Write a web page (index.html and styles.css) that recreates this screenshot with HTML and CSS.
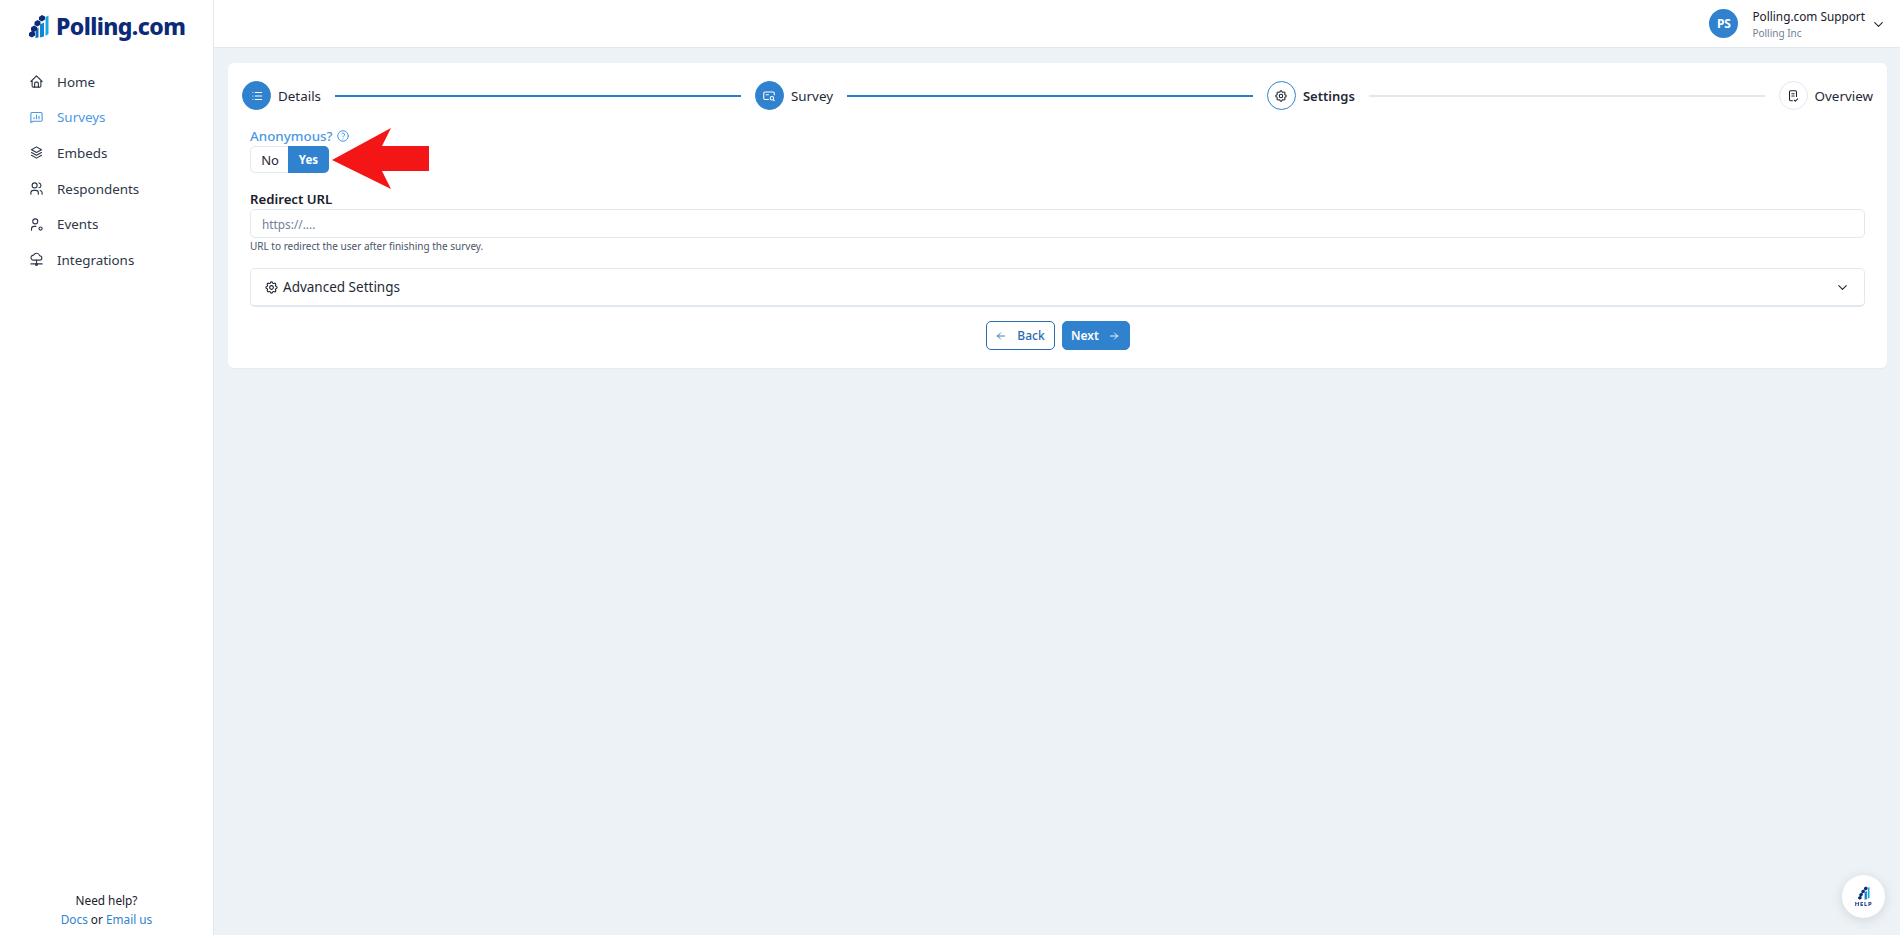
FILE: index.html
```html
<!DOCTYPE html>
<html lang="en">
<head>
    <meta charset="UTF-8">
    <meta name="viewport" content="width=device-width, initial-scale=1.0">
    <title>Polling.com</title>
    <link rel="stylesheet" href="styles.css">
</head>
<body>
    <div class="app">
        <aside class="sidebar">
            <div class="logo">
                <svg class="logo-mark" viewBox="0 0 20 24">
                    <path d="M16.500 3l3-1.500V20l-3 2z" fill="#1aa7e6"/>
                    <path d="M11 10.500l4-2V22.500l-4 1z" fill="#1583d4"/>
                    <path d="M6.500 15l3-1.500v10l-3 .5z" fill="#0f6fc0"/>
                    <path d="M10 3l3-2 3 1.500v3l-3 2-3-1.500zM5.500 8l3-2 3 1.500v3l-3 2-3-1.500zM2 13.500l3-2 3 1.500v3l-3 2-3-1.500zM0 19l3-2 3 1.500v3l-3 2-3-1.500z" fill="#0b2a78"/>
                </svg>
                <span class="logo-text">Polling.com</span>
            </div>
            <nav class="nav">
                <a class="nav-item">
                    <svg class="icon" viewBox="0 0 24 24"><path d="M5 12H3l9-9 9 9h-2"/><path d="M5 12v7a2 2 0 0 0 2 2h10a2 2 0 0 0 2-2v-7"/><path d="M9 21v-6a2 2 0 0 1 2-2h2a2 2 0 0 1 2 2v6"/></svg>
                    Home
                </a>
                <a class="nav-item active">
                    <svg class="icon" viewBox="0 0 24 24"><path d="M3 20V6a2 2 0 0 1 2-2h14a2 2 0 0 1 2 2v10a2 2 0 0 1-2 2H7z"/><path d="M8 14v-2M12 14V8M16 14v-4"/></svg>
                    Surveys
                </a>
                <a class="nav-item">
                    <svg class="icon" viewBox="0 0 24 24"><path d="M12 3L4 7.500l8 4.500 8-4.500z"/><path d="M4 12l8 4.500 8-4.500"/><path d="M4 16.500l8 4.500 8-4.500"/></svg>
                    Embeds
                </a>
                <a class="nav-item">
                    <svg class="icon" viewBox="0 0 24 24"><circle cx="9" cy="7" r="4"/><path d="M3 21v-2a4 4 0 0 1 4-4h4a4 4 0 0 1 4 4v2"/><path d="M16 3.100a4 4 0 0 1 0 7.800"/><path d="M21 21v-2a4 4 0 0 0-3-3.900"/></svg>
                    Respondents
                </a>
                <a class="nav-item">
                    <svg class="icon" viewBox="0 0 24 24"><circle cx="10" cy="7" r="4"/><path d="M4 21v-2a4 4 0 0 1 4-4h3"/><circle cx="18.500" cy="18.500" r="2.500"/></svg>
                    Events
                </a>
                <a class="nav-item">
                    <svg class="icon" viewBox="0 0 24 24"><path d="M7 13a4 4 0 0 1 .5-8 5 5 0 0 1 9.500 1 3.500 3.500 0 0 1 0 7z"/><path d="M12 13v6"/><path d="M3 19h18"/><circle cx="12" cy="20" r="1.500"/></svg>
                    Integrations
                </a>
            </nav>
            <div class="side-help">
                <div>Need help?</div>
                <div><a class="link">Docs</a> or <a class="link">Email us</a></div>
            </div>
        </aside>

        <div class="main">
            <header class="topbar">
                <div class="avatar">PS</div>
                <div class="account">
                    <div class="account-name">Polling.com Support</div>
                    <div class="account-org">Polling Inc</div>
                </div>
                <svg class="icon chevron-top" viewBox="0 0 24 24"><path d="M6 9l6 6 6-6"/></svg>
            </header>

            <main class="content">
                <section class="card">
                    <div class="stepper">
                        <div class="step">
                            <span class="step-circle done">
                                <svg class="icon" viewBox="0 0 24 24"><path d="M9 6h11M9 12h11M9 18h11M5 6v.01M5 12v.01M5 18v.01"/></svg>
                            </span>
                            <span>Details</span>
                        </div>
                        <div class="step-line done"></div>
                        <div class="step">
                            <span class="step-circle done">
                                <svg class="icon" viewBox="0 0 24 24"><path d="M11 18H5a2 2 0 0 1-2-2V7a2 2 0 0 1 2-2h14a2 2 0 0 1 2 2v3"/><path d="M7 10h4"/><circle cx="17" cy="16" r="3"/><path d="M19.500 18.500L21 20"/></svg>
                            </span>
                            <span>Survey</span>
                        </div>
                        <div class="step-line done"></div>
                        <div class="step current">
                            <span class="step-circle">
                                <svg class="icon" viewBox="0 0 24 24"><path d="M10.325 4.317c.426-1.756 2.924-1.756 3.350 0a1.724 1.724 0 0 0 2.573 1.066c1.543-.94 3.310.826 2.370 2.370a1.724 1.724 0 0 0 1.065 2.572c1.756.426 1.756 2.924 0 3.350a1.724 1.724 0 0 0-1.066 2.573c.94 1.543-.826 3.310-2.370 2.370a1.724 1.724 0 0 0-2.572 1.065c-.426 1.756-2.924 1.756-3.350 0a1.724 1.724 0 0 0-2.573-1.066c-1.543.94-3.310-.826-2.370-2.370a1.724 1.724 0 0 0-1.065-2.572c-1.756-.426-1.756-2.924 0-3.350a1.724 1.724 0 0 0 1.066-2.573c-.94-1.543.826-3.310 2.370-2.370c1 .608 2.296.07 2.572-1.065z"/><circle cx="12" cy="12" r="3"/></svg>
                            </span>
                            <span>Settings</span>
                        </div>
                        <div class="step-line short"></div>
                        <div class="step">
                            <span class="step-circle todo">
                                <svg class="icon" viewBox="0 0 24 24"><path d="M11 20H8a2 2 0 0 1-2-2V5a2 2 0 0 1 2-2h8a2 2 0 0 1 2 2v8"/><path d="M10 8h4M10 12h4"/><path d="M14 19l2 2 4-4"/></svg>
                            </span>
                            <span>Overview</span>
                        </div>
                    </div>

                    <form class="form">
                        <div class="anon">
                            <div class="anon-label">
                                Anonymous?
                                <svg class="icon" viewBox="0 0 24 24"><circle cx="12" cy="12" r="9"/><path d="M12 17v.01M12 13.500a1.500 1.500 0 0 1 1-1.500 2.600 2.600 0 1 0-3-4"/></svg>
                            </div>
                            <div class="segmented">
                                <span class="seg">No</span>
                                <span class="seg on">Yes</span>
                            </div>
                            <svg class="red-arrow" viewBox="0 0 97 61"><path d="M0 32L59 0l-9 18h47v25H50l9 18z"/></svg>
                        </div>

                        <div class="field">
                            <label class="field-label">Redirect URL</label>
                            <input class="text-input" type="text" placeholder="https://....">
                            <div class="hint">URL to redirect the user after finishing the survey.</div>
                        </div>

                        <div class="accordion">
                            <svg class="icon" viewBox="0 0 24 24"><path d="M10.325 4.317c.426-1.756 2.924-1.756 3.350 0a1.724 1.724 0 0 0 2.573 1.066c1.543-.94 3.310.826 2.370 2.370a1.724 1.724 0 0 0 1.065 2.572c1.756.426 1.756 2.924 0 3.350a1.724 1.724 0 0 0-1.066 2.573c.94 1.543-.826 3.310-2.370 2.370a1.724 1.724 0 0 0-2.572 1.065c-.426 1.756-2.924 1.756-3.350 0a1.724 1.724 0 0 0-2.573-1.066c-1.543.94-3.310-.826-2.370-2.370a1.724 1.724 0 0 0-1.065-2.572c-1.756-.426-1.756-2.924 0-3.350a1.724 1.724 0 0 0 1.066-2.573c-.94-1.543.826-3.310 2.370-2.370c1 .608 2.296.07 2.572-1.065z"/><circle cx="12" cy="12" r="3"/></svg>
                            <span>Advanced Settings</span>
                            <svg class="icon chevron" viewBox="0 0 24 24"><path d="M6 9l6 6 6-6"/></svg>
                        </div>

                        <div class="actions">
                            <button type="button" class="btn btn-outline">
                                <svg class="icon" viewBox="0 0 24 24"><path d="M5 12h14M5 12l6 6M5 12l6-6"/></svg>
                                Back
                            </button>
                            <button type="button" class="btn btn-primary">
                                Next
                                <svg class="icon" viewBox="0 0 24 24"><path d="M5 12h14M13 18l6-6M13 6l6 6"/></svg>
                            </button>
                        </div>
                    </form>
                </section>
            </main>
        </div>
    </div>

    <div class="help-bubble">
        <svg class="help-mark" viewBox="0 0 20 24">
            <path d="M16.500 3l3-1.500V20l-3 2z" fill="#1aa7e6"/>
            <path d="M11 10.500l4-2V22.500l-4 1z" fill="#1583d4"/>
            <path d="M10 3l3-2 3 1.500v3l-3 2-3-1.500zM5.500 8l3-2 3 1.500v3l-3 2-3-1.500zM2 13.500l3-2 3 1.500v3l-3 2-3-1.500zM0 19l3-2 3 1.500v3l-3 2-3-1.500z" fill="#0b2a78"/>
        </svg>
        <span class="help-text">HELP</span>
    </div>
</body>
</html>
```

FILE: styles.css
```css
* {
    box-sizing: border-box;
}
body {
    margin: 0;
    font-family: "Noto Sans", sans-serif;
    font-size: 13.4px;
    color: #1f2937;
    background: #edf2f7;
    overflow: hidden;
}
.app {
    display: flex;
    height: 935px;
}
.icon {
    width: 15px;
    height: 15px;
    fill: none;
    stroke: currentColor;
    stroke-width: 1.800;
    stroke-linecap: round;
    stroke-linejoin: round;
    flex-shrink: 0;
}

/* sidebar */
.sidebar {
    width: 214px;
    flex-shrink: 0;
    display: flex;
    flex-direction: column;
    background: #fff;
    border-right: 1px solid #e2e8f0;
}
.logo {
    display: flex;
    align-items: center;
    gap: 7px;
    height: 48px;
    padding: 4px 0 0 29px;
}
.logo-mark {
    width: 20px;
    height: 24px;
}
.logo-text {
    font-size: 23px;
    font-weight: 800;
    letter-spacing: -0.6px;
    color: #0b2a78;
}
.nav {
    display: flex;
    flex-direction: column;
    padding-top: 16px;
}
.nav-item {
    display: flex;
    align-items: center;
    gap: 13px;
    height: 35.6px;
    padding-left: 29px;
    color: #2d3748;
}
.nav-item.active {
    color: #4a98e4;
}
.side-help {
    margin-top: auto;
    padding-bottom: 6px;
    text-align: center;
    font-size: 11.800px;
    line-height: 19px;
    color: #1a202c;
}
.link {
    color: #3182ce;
}

/* top bar */
.main {
    flex: 1;
    min-width: 0;
    display: flex;
    flex-direction: column;
}
.topbar {
    display: flex;
    align-items: center;
    justify-content: flex-end;
    height: 48px;
    padding-right: 14px;
    background: #fff;
    border-bottom: 1px solid #e2e8f0;
}
.avatar {
    display: flex;
    align-items: center;
    justify-content: center;
    width: 29px;
    height: 29px;
    margin-right: 14px;
    border-radius: 50%;
    background: #3182ce;
    color: #fff;
    font-size: 12px;
    font-weight: 700;
}
.account {
    margin-right: 6px;
}
.account-name {
    font-size: 11.800px;
    line-height: 18px;
    color: #1a202c;
}
.account-org {
    font-size: 10px;
    line-height: 16px;
    color: #718096;
}
.chevron-top {
    margin-top: 2px;
}

/* card */
.content {
    padding: 15px 13px 0 14px;
}
.card {
    height: 305px;
    padding: 18px 14px 0;
    background: #fff;
    border-radius: 6px;
    box-shadow: 0 1px 2px rgba(0, 0, 0, 0.04);
}
.stepper {
    display: flex;
    align-items: center;
    height: 29px;
}
.step {
    display: flex;
    align-items: center;
    gap: 7px;
    white-space: nowrap;
}
.step.current {
    font-weight: 600;
    font-size: 13px;
}
.step-circle {
    display: flex;
    align-items: center;
    justify-content: center;
    width: 29px;
    height: 29px;
    border-radius: 50%;
    border: 1px solid #3182ce;
    color: #1a202c;
}
.step-circle .icon {
    width: 14px;
    height: 14px;
}
.step-circle.done {
    background: #3182ce;
    color: #fff;
}
.step-circle.todo {
    border-color: #e2e8f0;
}
.step-line {
    flex: 1;
    height: 2px;
    margin: 0 14px;
    background: #e2e8f0;
}
.step-line.done {
    background: #2b7bc9;
}
.step-line.short {
    flex: 0.975;
}

/* form */
.form {
    padding: 0 8px 0 8px;
}
.anon {
    position: relative;
    padding-top: 15px;
}
.anon-label {
    display: flex;
    align-items: center;
    gap: 3px;
    height: 21px;
    color: #4a98e4;
    font-weight: 500;
}
.anon-label .icon {
    width: 14px;
    height: 14px;
    stroke-width: 1.700;
}
.segmented {
    display: flex;
    width: 79px;
    height: 27px;
    border: 1px solid #e2e8f0;
    border-radius: 5px;
    font-size: 13px;
}
.seg {
    display: flex;
    align-items: center;
    justify-content: center;
    width: 38px;
}
.seg.on {
    width: 41px;
    margin: -1px;
    background: #3182ce;
    color: #fff;
    font-size: 11.500px;
    font-weight: 700;
    border-radius: 0 5px 5px 0;
}
.red-arrow {
    position: absolute;
    left: 82px;
    top: 18px;
    width: 97px;
    height: 61px;
    fill: #f41616;
}
.field {
    padding-top: 17px;
}
.field-label {
    display: block;
    height: 19px;
    font-size: 13.200px;
    font-weight: 600;
    color: #1a202c;
}
.text-input {
    display: block;
    width: 100%;
    height: 29px;
    padding: 0 11px;
    border: 1px solid #e2e8f0;
    border-radius: 5px;
    font: inherit;
    font-size: 11.800px;
}
.text-input::placeholder {
    color: #718096;
}
.hint {
    padding-top: 1px;
    font-size: 10px;
    line-height: 15px;
    color: #4a5568;
}
.accordion {
    display: flex;
    align-items: center;
    gap: 4px;
    height: 39px;
    margin-top: 14px;
    padding: 0 14px 0 13px;
    border: 1px solid #e2e8f0;
    border-bottom-width: 2px;
    border-radius: 5px;
    font-size: 13.500px;
}
.accordion .chevron {
    margin-left: auto;
}
.actions {
    display: flex;
    justify-content: center;
    gap: 7px;
    padding-top: 14px;
}
.btn {
    display: flex;
    align-items: center;
    justify-content: center;
    height: 29px;
    border-radius: 5px;
    font: inherit;
    font-size: 12px;
    font-weight: 500;
}
.btn .icon {
    width: 12px;
    height: 12px;
}
.btn-outline {
    width: 69px;
    gap: 10px;
    background: #fff;
    border: 1px solid #2b6cb0;
    color: #2b6cb0;
}
.btn-primary {
    width: 68px;
    gap: 9px;
    background: #3182ce;
    border: 1px solid #3182ce;
    color: #fff;
    font-weight: 600;
}

/* help bubble */
.help-bubble {
    position: fixed;
    right: 15px;
    bottom: 17px;
    display: flex;
    flex-direction: column;
    align-items: center;
    justify-content: center;
    width: 43px;
    height: 43px;
    border-radius: 50%;
    background: #fff;
    box-shadow: 0 2px 12px rgba(0, 0, 0, 0.12);
}
.help-mark {
    width: 12px;
    height: 14px;
}
.help-text {
    font-size: 6px;
    font-weight: 700;
    letter-spacing: 0.6px;
    line-height: 8px;
    color: #0b2a78;
}
```
